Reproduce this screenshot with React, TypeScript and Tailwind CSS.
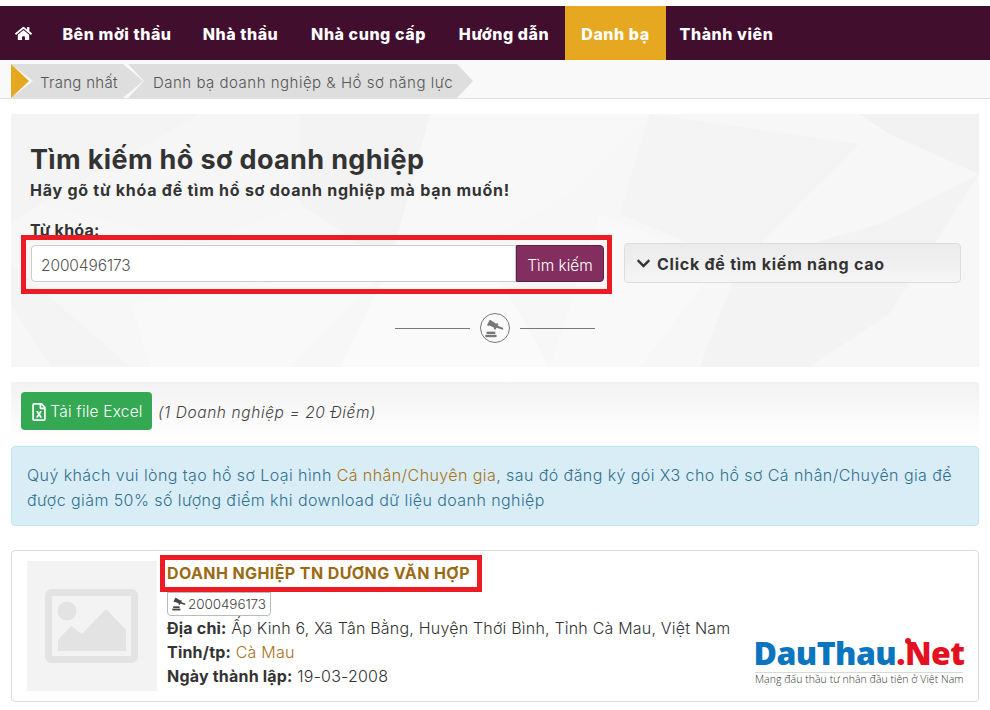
import { FaHome, FaRegFileExcel, FaChevronDown } from "react-icons/fa";

const navItems = [
    { label: "Bên mời thầu", width: "w-[140px]" },
    { label: "Nhà thầu", width: "w-[107px]" },
    { label: "Nhà cung cấp", width: "w-[149px]" },
    { label: "Hướng dẫn", width: "w-[122px]" },
];

function PanelFacets() {
    // low poly backdrop of the search panel
    return (
        <svg className="absolute inset-0 h-full w-full" viewBox="0 0 970 253" preserveAspectRatio="none">
            <rect width="970" height="253" fill="#f7f7f7" />
            <polygon points="0,0 190,0 30,90 0,110" fill="#f4f4f4" />
            <polygon points="190,0 290,0 290,90 190,130 30,90" fill="#f6f6f6" />
            <polygon points="290,0 420,0 380,150 290,90" fill="#f3f3f3" />
            <polygon points="420,0 640,0 560,80 470,130 380,150" fill="#f8f8f8" />
            <polygon points="640,0 850,30 730,150 610,100" fill="#f4f4f4" />
            <polygon points="850,0 970,0 970,60 880,20" fill="#f2f2f2" />
            <polygon points="730,150 870,110 970,60 880,200 800,253 690,253" fill="#f3f3f3" />
            <polygon points="0,150 120,253 40,253 0,190" fill="#f4f4f4" />
            <polygon points="120,190 380,150 280,253 140,253" fill="#f9f9f9" />
            <polygon points="380,150 470,130 540,253 330,253" fill="#fafafa" />
            <polygon points="590,100 710,150 630,253 540,253" fill="#f9f9f9" />
        </svg>
    );
}

function GavelMark({ size }: { size: number }) {
    return (
        <svg width={size} height={size} viewBox="0 0 24 24" fill="currentColor">
            <polygon points="8,2 14,6 15,5 17,6.5 13,13.5 11,12.5 11.5,11 5,8 4.5,9 2.5,8 6,1 8,2" />
            <polygon points="14,7.5 23,11.5 22.5,13.5 12.5,10.5" />
            <rect x="2" y="16" width="11" height="3" />
            <rect x="0.5" y="20" width="14" height="3" />
        </svg>
    );
}

function ImagePlaceholder() {
    return (
        <div className="h-[130px] w-[130px] shrink-0 bg-[#f3f3f3]">
            <svg width="130" height="130" viewBox="0 0 130 130">
                <rect x="21.5" y="31.5" width="86" height="67" rx="3" fill="none" stroke="#e3e3e3" strokeWidth="7" />
                <circle cx="40" cy="50" r="9.5" fill="#e3e3e3" />
                <polygon points="31,79 44,65 55,73 79,48 99,69 99,90 31,90" fill="#e3e3e3" />
            </svg>
        </div>
    );
}

function Logo() {
    return (
        <div className="mr-[-2px] mb-[6px] flex w-[212px] flex-col items-center self-end">
            <div className="relative flex h-[31px] items-center font-['Open_Sans',sans-serif] text-[32px] leading-[31px] font-extrabold tracking-[-0.55px]">
                <span className="text-[#0b75c0]">DauThau</span>
                <span className="text-[#e3101f]">.Net</span>
                <span className="absolute top-[1px] right-[53px] h-[6px] w-[6px] rounded-full bg-[#e3101f]" />
            </div>
            <div className="mt-[4px] w-[208px] border-t border-[#d9d9d9] text-center font-['Open_Sans',sans-serif] text-[10.5px] leading-[12px] tracking-[0.05px] whitespace-nowrap text-[#333]">
                Mạng đấu thầu tư nhân đầu tiên ở Việt Nam
            </div>
        </div>
    );
}

export default function App() {
    return (
        <div className="min-h-[710px] overflow-hidden bg-white pt-[6px] font-['Inter',sans-serif] font-light text-[#333]">
            <nav className="flex h-[54px] items-stretch bg-[#410e2e] pt-[2px] text-[16px] font-extrabold tracking-[0.55px] text-white">
                <a className="flex w-[47px] items-center justify-center pb-[2px] text-[17px]"><FaHome /></a>
                {navItems.map((item) => (
                    <a key={item.label} className={`flex items-center justify-center whitespace-nowrap ${item.width}`}>{item.label}</a>
                ))}
                <a className="mt-[-2px] flex w-[101px] items-center justify-center bg-[#e5a820] pt-[2px] whitespace-nowrap">Danh bạ</a>
                <a className="flex w-[121px] items-center justify-center whitespace-nowrap">Thành viên</a>
            </nav>

            <div className="flex h-[39px] items-end border-b border-[#e2e2e2] bg-[#f9f9f9] pl-[11px]">
                <div className="relative flex h-[34px] w-[132px] items-center bg-[#dedede] pt-[4px] pl-[29px] text-[15px] tracking-[0.3px] text-[#555] [clip-path:polygon(0_0,112px_0,100%_50%,112px_100%,0_100%)]">
                    <span className="absolute top-0 left-0 h-full w-[22px] bg-[#f9f9f9] [clip-path:polygon(0_0,100%_50%,0_100%)]" />
                    <span className="absolute top-0 left-0 h-full w-[18px] bg-[#e5a820] [clip-path:polygon(0_0,100%_50%,0_100%)]" />
                    <span className="relative whitespace-nowrap">Trang nhất</span>
                </div>
                <div className="ml-[-15px] flex h-[34px] w-[345px] items-center bg-[#dedede] pt-[4px] pl-[25px] text-[15px] tracking-[0.5px] whitespace-nowrap text-[#555] [clip-path:polygon(0_0,329px_0,100%_50%,329px_100%,0_100%,16px_50%)]">
                    Danh bạ doanh nghiệp &amp; Hồ sơ năng lực
                </div>
            </div>

            <section className="relative mx-[11px] mt-[15px] h-[253px] pt-[28px]">
                <PanelFacets />
                <div className="relative px-[10px]">
                    <div className="px-[9px]">
                        <h1 className="text-[27px] leading-[36px] font-bold tracking-[0.35px] text-[#333]">Tìm kiếm hồ sơ doanh nghiệp</h1>
                        <p className="mt-[1px] text-[16px] leading-[22px] font-bold tracking-[0.75px] text-[#333]">Hãy gõ từ khóa để tìm hồ sơ doanh nghiệp mà bạn muốn!</p>
                        <p className="mt-[18px] text-[16px] leading-[22px] font-bold tracking-[0.25px] text-[#333]">Từ khóa:</p>
                    </div>
                    <div className="mt-[-6px] flex items-start gap-[12px]">
                        <div className="w-[591px] border-[5px] border-[#ed1c24] pt-[5px] pr-[3px] pb-[7px] pl-[5px]">
                            <div className="flex h-[37px]">
                                <div className="flex flex-1 items-center rounded-l-[4px] border border-[#ccc] bg-white px-[9px] pt-[5px] text-[15.5px] tracking-[-0.1px] text-[#555]">2000496173</div>
                                <button className="w-[88px] rounded-r-[4px] border border-[#5c2148] bg-[#822f60] pt-[5px] text-[15.5px] text-white">Tìm kiếm</button>
                            </div>
                        </div>
                        <div className="mt-[8px] flex h-[40px] w-[337px] items-center gap-[6px] rounded-[4px] border border-[#ddd] bg-gradient-to-b from-[#ebebeb] to-[#f5f5f5] px-[11px] text-[16px] font-bold tracking-[0.75px] text-[#333]">
                            <FaChevronDown className="text-[15px]" />
                            <span className="pt-[2px] whitespace-nowrap">Click để tìm kiếm nâng cao</span>
                        </div>
                    </div>
                    <div className="mt-[19px] flex items-center justify-center gap-[10px] pr-[1px]">
                        <span className="h-px w-[75px] bg-[#777]" />
                        <span className="flex h-[30px] w-[30px] items-center justify-center rounded-full border border-[#777] text-[#777]"><GavelMark size={19} /></span>
                        <span className="h-px w-[75px] bg-[#777]" />
                    </div>
                </div>
            </section>

            <div className="mx-[11px] mt-[15px] flex h-[58px] items-start gap-[6px] bg-gradient-to-b from-[#f2f2f2] to-white px-[10px] pt-[10px]">
                <button className="flex h-[38px] w-[131px] items-center justify-center gap-[2px] rounded-[4px] bg-[#34a853] pt-[2px] text-[15.5px] tracking-[0.2px] whitespace-nowrap text-white">
                    <FaRegFileExcel className="text-[18px]" />
                    Tải file Excel
                </button>
                <em className="mt-[10px] text-[15.5px] leading-[21px] tracking-[0.6px] whitespace-nowrap text-[#444]">(1 Doanh nghiệp = 20 Điểm)</em>
            </div>

            <div className="mx-[11px] mt-[6px] h-[80px] rounded-[4px] border border-[#bce8f1] bg-[#d9edf7] px-[15px] py-[16px] text-[16px] leading-[24.5px] tracking-[0.42px] whitespace-nowrap text-[#31708f]">
                Quý khách vui lòng tạo hồ sơ Loại hình <span className="text-[#a5721a]">Cá nhân/Chuyên gia</span>, sau đó đăng ký gói X3 cho hồ sơ Cá nhân/Chuyên gia để<br />được giảm 50% số lượng điểm khi download dữ liệu doanh nghiệp
            </div>

            <div className="mx-[11px] mt-[24px] flex h-[152px] rounded-[4px] border border-[#ddd] py-[10px] pr-[15px] pl-[15px]">
                <ImagePlaceholder />
                <div className="ml-[3px] min-w-0 flex-1">
                    <div className="mt-[-6px] w-fit border-[5px] border-[#ed1c24] pr-[7px] pl-[2px] text-[16px] leading-[27px] font-bold tracking-[0.4px] text-[#9b6a14]">DOANH NGHIỆP TN DƯƠNG VĂN HỢP</div>
                    <div className="ml-[7px] flex h-[24px] w-[104px] items-center justify-center gap-[2px] rounded-b-[4px] border border-[#bbb] text-[13.5px] tracking-[-0.1px] text-[#444]">
                        <GavelMark size={14} />2000496173
                    </div>
                    <div className="ml-[7px] text-[16px] leading-[24px] tracking-[0.2px]">
                        <p className="whitespace-nowrap"><b className="font-bold">Địa chỉ:</b> Ấp Kinh 6, Xã Tân Bằng, Huyện Thới Bình, Tỉnh Cà Mau, Việt Nam</p>
                        <p><b className="font-bold">Tỉnh/tp:</b> <span className="text-[#a5721a]">Cà Mau</span></p>
                        <p><b className="font-bold">Ngày thành lập:</b> 19-03-2008</p>
                    </div>
                </div>
                <Logo />
            </div>
        </div>
    );
}
